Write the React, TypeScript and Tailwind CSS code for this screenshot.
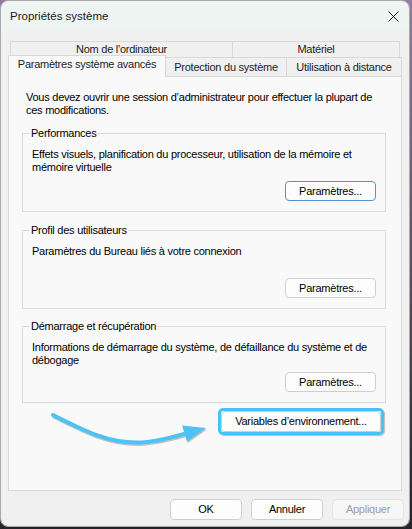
import React from "react";

function Btn({
  children,
  className = "",
  variant = "normal",
}: {
  children: React.ReactNode;
  className?: string;
  variant?: "normal" | "default" | "disabled";
}) {
  const v =
    variant === "default"
      ? "border-[#5a8fcc] bg-[#fdfdfd] text-black"
      : variant === "disabled"
      ? "border-[#e3e3e3] bg-[#f6f6f6] text-[#9e9e9e]"
      : "border-[#cfcfcf] bg-[#fdfdfd] text-black";
  return (
    <div
      className={`flex items-center justify-center rounded-[4px] border ${v} ${className}`}
    >
      {children}
    </div>
  );
}

function Group({
  title,
  className,
  children,
}: {
  title: string;
  className: string;
  children: React.ReactNode;
}) {
  return (
    <div
      className={`ml-[13px] w-[364px] border border-[#dcdcdc] flex flex-col px-[9px] ${className}`}
    >
      <div className="-mt-[7px] -ml-[2px] self-start bg-[#f9f9f9] px-[1px] whitespace-nowrap">
        {title}
      </div>
      <div className="mt-[8px] whitespace-nowrap">{children}</div>
      <div className="mt-auto mb-[10px] flex justify-end">
        <Btn className="w-[91px] h-[20px]" variant={title === "Performances" ? "default" : "normal"}>
          Paramètres...
        </Btn>
      </div>
    </div>
  );
}

export default function App() {
  return (
    <div className="relative w-[412px] h-[529px] overflow-hidden bg-gradient-to-b from-[#8f7ba4] via-[#5d5068] to-[#24242a] font-['Liberation_Sans',Arial,sans-serif] text-[11px] leading-[13px] tracking-[-0.25px] text-black">
      <div className="w-[410px] h-[527px] border border-[#a9a9a9] rounded-[8px] overflow-hidden flex flex-col">
        {/* Title bar */}
        <div className="h-[30px] bg-[#eef4f2] flex items-center justify-between pl-[9px] pr-[10px]">
          <span className="text-[11.5px] tracking-normal text-[#1a1a1a] pt-[1px]">
            Propriétés système
          </span>
          <svg width="11" height="11" viewBox="0 0 11 11" className="mt-[1px]">
            <path d="M0.5 0.5 L10.5 10.5 M10.5 0.5 L0.5 10.5" stroke="#1c1c1c" strokeWidth="1" fill="none" />
          </svg>
        </div>

        {/* Body */}
        <div className="flex-1 bg-[#f0f0f0] px-[7px] pt-[10px] flex flex-col">
          {/* Tabs row 1 */}
          <div className="flex ml-[2px] h-[16px] text-[#1b1b1f]">
            <div className="w-[222px] border-t border-l border-[#d9d9d9] flex items-center justify-center whitespace-nowrap">
              Nom de l'ordinateur
            </div>
            <div className="w-[168px] border-t border-l border-r border-[#d9d9d9] flex items-center justify-center whitespace-nowrap">
              Matériel
            </div>
          </div>
          {/* Tabs row 2 */}
          <div className="flex items-end h-[19px] text-[#1b1b1f]">
            <div className="relative z-10 -mb-[1px] w-[158px] h-[22px] bg-[#f9f9f9] border-t border-l border-r border-[#d9d9d9] flex justify-center pt-[2px] whitespace-nowrap">
              Paramètres système avancés
            </div>
            <div className="w-[121px] h-[19px] border-t border-r border-[#d9d9d9] flex items-center justify-center whitespace-nowrap">
              Protection du système
            </div>
            <div className="w-[115px] h-[19px] border-t border-r border-[#d9d9d9] flex items-center justify-center whitespace-nowrap">
              Utilisation à distance
            </div>
          </div>

          {/* Panel */}
          <div className="w-[394px] h-[415px] border border-[#d9d9d9] bg-[#f9f9f9] flex flex-col">
            <div className="pt-[14px] pl-[17px] whitespace-nowrap">
              Vous devez ouvrir une session d’administrateur pour effectuer la plupart de
              <br />
              ces modifications.
            </div>

            <Group title="Performances" className="mt-[16px] h-[79px]">
              Effets visuels, planification du processeur, utilisation de la mémoire et
              <br />
              mémoire virtuelle
            </Group>

            <Group title="Profil des utilisateurs" className="mt-[18px] h-[79px]">
              Paramètres du Bureau liés à votre connexion
            </Group>

            <Group title="Démarrage et récupération" className="mt-[17px] h-[77px]">
              Informations de démarrage du système, de défaillance du système et de
              <br />
              débogage
            </Group>

            <div className="mt-[5px] ml-auto mr-[17px] w-[166px] h-[27px] rounded-[5px] border-[3px] border-[#47c2f6] shadow-[1px_1px_1px_rgba(0,0,0,0.25)]">
              <Btn className="w-full h-full rounded-[2px]">Variables d’environnement...</Btn>
            </div>
          </div>

          {/* Bottom buttons */}
          <div className="mt-[8px] -mr-[2px] flex justify-end gap-[9px]">
            <Btn className="w-[72px] h-[21px]">OK</Btn>
            <Btn className="w-[72px] h-[21px]">Annuler</Btn>
            <Btn className="w-[72px] h-[21px]" variant="disabled">
              Appliquer
            </Btn>
          </div>
        </div>
      </div>

      {/* Annotation arrow overlay */}
      <svg
        className="absolute left-0 top-0 pointer-events-none"
        width="412"
        height="529"
        viewBox="0 0 412 529"
      >
        <g transform="translate(0.8,1.4)" opacity="0.35">
          <path
            d="M53 415 C 85 431, 108 443, 138 442.5 C 158 442, 176 436, 191 432"
            stroke="#555"
            strokeWidth="4"
            fill="none"
            strokeLinecap="round"
          />
          <polygon points="182,425.5 206,428 187,441.5" fill="#555" />
        </g>
        <path
          d="M53 415 C 85 431, 108 443, 138 442.5 C 158 442, 176 436, 191 432"
          stroke="#4cc3f7"
          strokeWidth="4"
          fill="none"
          strokeLinecap="round"
        />
        <polygon points="182,425.5 206,428 187,441.5" fill="#4cc3f7" />
      </svg>
    </div>
  );
}
